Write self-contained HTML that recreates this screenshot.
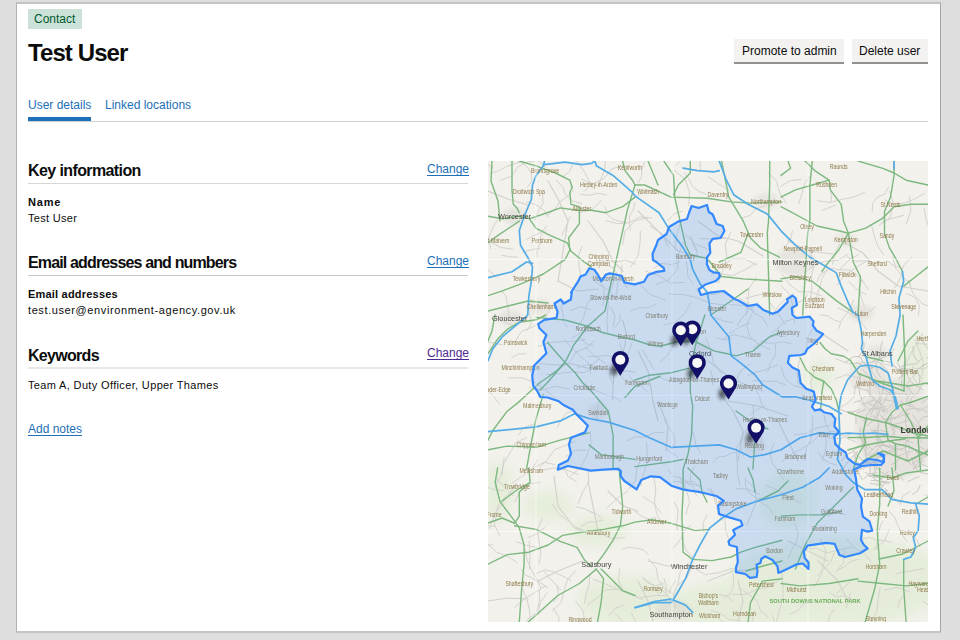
<!DOCTYPE html>
<html><head><meta charset="utf-8">
<style>
*{box-sizing:border-box;margin:0;padding:0}
html,body{width:960px;height:640px;overflow:hidden;background:#dedede;font-family:"Liberation Sans",sans-serif;color:#0b0c0c}
#panel{position:absolute;left:16px;top:2px;width:925px;height:631px;background:#fff;border-style:solid;border-width:2px 1px 2px 1px;border-color:#c4c4c4 #a6a6a6 #c4c4c4 #b0b0b0}
.abs{position:absolute;white-space:nowrap}
.tag{left:28px;top:9px;width:54px;height:20px;background:#cce2d8;color:#005a30;font-size:12px;line-height:20px;padding-left:6px}
h1{position:absolute;left:28px;top:38px;font-size:24px;font-weight:bold;line-height:30px;white-space:nowrap;letter-spacing:-0.9px}
.btn{position:absolute;top:39px;height:23px;background:#f3f2f1;box-shadow:0 2px 0 #929191;border-bottom:0;color:#0b0c0c;font-size:12px;line-height:25px;padding:0 8px;white-space:nowrap}
.tab{position:absolute;top:97px;font-size:12px;line-height:16px;color:#1d70b8;white-space:nowrap}
.tabbar{position:absolute;left:28px;top:117px;width:63px;height:4px;background:#1d70b8}
.tabline{position:absolute;left:28px;top:121px;width:900px;height:1px;background:#cdcfd0}
h2{position:absolute;left:28px;font-size:16px;font-weight:bold;line-height:20px;white-space:nowrap}
.rule{position:absolute;left:28px;width:440px;height:1px;background:#d8d8d8}
.chg{position:absolute;left:427px;font-size:12px;line-height:16px;color:#1d70b8;text-decoration:underline;text-decoration-skip-ink:none;text-underline-offset:2px;white-space:nowrap}
.lbl{position:absolute;left:28px;font-size:11px;font-weight:bold;line-height:14px;white-space:nowrap}
.val{position:absolute;left:28px;font-size:11px;line-height:14px;white-space:nowrap}
#map{position:absolute;left:488px;top:161px;width:440px;height:461px;overflow:hidden;background:#f2efe9}
.t{font-size:6.3px;fill:#8e7a4b}.c{font-size:7.3px;fill:#45453d}.c2{font-size:8px;fill:#4a4a4a}.L{font-size:8.6px;font-weight:bold;fill:#3a3a33}
</style></head>
<body>
<div id="panel"></div>
<div class="abs tag">Contact</div>
<h1>Test User</h1>
<div class="btn" style="left:734px;width:110px">Promote to admin</div>
<div class="btn" style="left:852px;width:76px;padding-left:7px">Delete user</div>
<div class="tab" style="left:28px">User details</div>
<div class="tab" style="left:105px">Linked locations</div>
<div class="tabbar"></div>
<div class="tabline"></div>

<h2 style="top:161px;letter-spacing:-0.6px">Key information</h2>
<div class="chg" style="top:161px">Change</div>
<div class="rule" style="top:183px;background:#d6d6d6"></div>
<div class="lbl" style="top:195px;letter-spacing:0.8px">Name</div>
<div class="val" style="top:211px;letter-spacing:0.3px">Test User</div>

<h2 style="top:253px;letter-spacing:-0.85px">Email addresses and numbers</h2>
<div class="chg" style="top:253px">Change</div>
<div class="rule" style="top:275px;background:#c6c6c6"></div>
<div class="lbl" style="top:287px;letter-spacing:0.2px">Email addresses</div>
<div class="val" style="top:303px;letter-spacing:0.6px">test.user@environment-agency.gov.uk</div>

<h2 style="top:346px;letter-spacing:-0.7px">Keywords</h2>
<div class="chg" style="top:345px;color:#4c2c92">Change</div>
<div class="rule" style="top:367px;height:2px;background:#e8e8e8"></div>
<div class="val" style="top:378px;letter-spacing:0.35px">Team A, Duty Officer, Upper Thames</div>
<div class="chg" style="left:28px;top:421px">Add notes</div>

<div id="map"><svg width="440" height="461" viewBox="0 0 440 461">
<defs><filter id="bl" x="-50%" y="-50%" width="200%" height="200%"><feGaussianBlur stdDeviation="2.2"/></filter><filter id="bl2" x="-50%" y="-50%" width="200%" height="200%"><feGaussianBlur stdDeviation="6"/></filter></defs>
<rect width="440" height="461" fill="#f2f1ec"/>
<g filter="url(#bl2)" fill="#e2edd6" opacity="0.8"><ellipse cx="350" cy="420" rx="110" ry="45"/><ellipse cx="250" cy="445" rx="70" ry="25"/><ellipse cx="140" cy="440" rx="50" ry="25"/><ellipse cx="430" cy="200" rx="15" ry="25"/><ellipse cx="10" cy="330" rx="15" ry="30"/><ellipse cx="110" cy="370" rx="30" ry="15"/><ellipse cx="60" cy="345" rx="25" ry="15"/><ellipse cx="330" cy="215" rx="15" ry="15"/><ellipse cx="300" cy="340" rx="30" ry="30"/></g>
<g filter="url(#bl)"><ellipse cx="408" cy="268" rx="40" ry="50" fill="#d9d6d0" opacity="0.5"/><ellipse cx="380" cy="215" rx="20" ry="15" fill="#d9d6d0" opacity="0.4"/><ellipse cx="26" cy="55" rx="12" ry="8" fill="#d9d6d0" opacity="0.5"/><ellipse cx="212" cy="190" rx="10" ry="9" fill="#d9d6d0" opacity="0.5"/><ellipse cx="110" cy="250" rx="10" ry="8" fill="#d9d6d0" opacity="0.5"/><ellipse cx="266" cy="285" rx="12" ry="8" fill="#d9d6d0" opacity="0.5"/><ellipse cx="185" cy="450" rx="18" ry="10" fill="#d9d6d0" opacity="0.5"/><ellipse cx="373" cy="152" rx="12" ry="8" fill="#d9d6d0" opacity="0.5"/><ellipse cx="307" cy="101" rx="20" ry="14" fill="#d9d6d0" opacity="0.45"/><ellipse cx="278" cy="40" rx="12" ry="8" fill="#d9d6d0" opacity="0.45"/><ellipse cx="52" cy="146" rx="12" ry="8" fill="#d9d6d0" opacity="0.45"/><ellipse cx="22" cy="157" rx="12" ry="8" fill="#d9d6d0" opacity="0.45"/><ellipse cx="389" cy="192" rx="10" ry="8" fill="#d9d6d0" opacity="0.45"/><ellipse cx="358" cy="79" rx="10" ry="7" fill="#d9d6d0" opacity="0.4"/></g>
<g fill="none" stroke-linejoin="round" stroke-linecap="round">
<g stroke="#d4d2cd" stroke-width="1"><polyline points="142.5,69.5 141.6,62.3 141.5,54.9 145.5,48.7 146.7,41.5"/><polyline points="37.8,192.8 30.2,192.9 23.7,196.9"/><polyline points="98.2,289.2 87.2,289.1 78.2,295.5"/><polyline points="377.7,133.5 368.4,128.1 360.8,120.5"/><polyline points="45.3,263.3 36.2,266.3 30.5,274"/><polyline points="90.6,313.7 79,309.1 66.8,306.9 54.6,309"/><polyline points="79.1,359.5 70.5,352.6 64.6,343.3"/><polyline points="126.7,451.9 134,459.6 135.5,470"/><polyline points="185.5,443.5 178.7,433.2 169.4,425.1"/><polyline points="305.9,274 318.4,272.3 329.7,266.7 342,264.4 350.9,255.5"/><polyline points="321.7,142.7 323.8,128.9 323.6,115 326.7,101.4 320.7,88.8"/><polyline points="203.1,77.5 208.1,86.7 209.9,97"/><polyline points="175.1,422.7 167.7,424.5 160.5,422.4 154.9,417.3"/><polyline points="380.2,128.4 372.4,116.8 360.9,108.9 347,108.7"/><polyline points="66.6,303.6 56.4,301.2 47.2,305.9"/><polyline points="184.3,170.2 186.9,179.1 183.7,187.8 178.8,195.5 171.5,201.3"/><polyline points="200.9,401.5 192.3,410.7 189.9,423.1 185.1,434.7 188,447"/><polyline points="29.6,96.2 21.9,95.7 14.2,94.4"/><polyline points="236.1,437.5 241.9,433.2 245,426.7 245.7,419.6 244.9,412.5"/><polyline points="160.2,56.6 146.7,59.9 137.1,70.1 134.4,83.8"/><polyline points="150.8,122.1 156.6,127.7 162.1,133.7 169.8,136.2 177.4,139.3"/><polyline points="11.9,243.5 3.8,233.3 -6.1,224.8 -18.8,221.6 -29.4,214"/><polyline points="234.3,359.1 229.3,348.9 228.2,337.5 222.5,327.5"/><polyline points="105.3,184.7 97.3,182.4 92.4,175.5"/><polyline points="347.7,217.7 358.8,213.6 370.2,216.7"/><polyline points="434.7,440.3 441,444.5 448,447.3 455.1,449.9"/><polyline points="433.5,281.3 431.5,271.2 424.3,263.8"/><polyline points="290.7,419.4 280.5,426.2 268.4,428.5 257.2,433.5 245,433.4"/><polyline points="427.5,182.5 439.7,183.2 448.7,191.4 460.8,192.5"/><polyline points="260,214.5 267.3,211.3 275.1,209.7 282.5,206.5 290.1,203.8"/><polyline points="57.6,6.6 49.4,-1.5 40.4,-8.8 36.2,-19.5 37.2,-31"/><polyline points="92.9,116.1 91.2,105.7 90.2,95.3 94,85.5"/><polyline points="26.8,341.1 31.6,330.5 40.7,323.2 52.2,321.4"/><polyline points="57.5,70 52.7,75.2 52.3,82.3 49,88.7 48.9,95.8"/><polyline points="208.3,334.3 205.6,327.4 202.6,320.6 202.4,313.2 206.1,306.7"/><polyline points="25,88.2 12.7,86.5 1.8,80.6"/><polyline points="401.5,204.3 388.1,201 374.3,201.9 360.5,202.7 347.7,197.7"/><polyline points="223.4,114.2 233.4,105.7 244.1,98.1 257.3,98.1 268.9,104.1"/><polyline points="60.3,56.1 55.2,48.5 47.4,43.5 38.6,40.8"/><polyline points="53.8,358.2 49.5,368.8 51,380.3 52.9,391.6 50.9,402.9"/><polyline points="41.4,408 42,394 41.2,380.1"/><polyline points="226.9,156.3 235.6,160 245,161.5"/><polyline points="201.8,324.2 195.3,317.5 186.1,315.8 180.1,308.7"/><polyline points="346.9,448 342,453.7 340,461.1"/><polyline points="332.5,377.9 337.9,389.5 336,402 332.9,414.4 326.5,425.4"/><polyline points="39.4,26.5 43.9,19.6 43.2,11.4 38.1,4.9 31.1,0.4"/><polyline points="267.6,102.5 256.3,109 244.5,114.6 231.6,112.6"/><polyline points="117.9,59.6 129.4,62.7 141.3,61.9 151.8,56 163.7,57.1"/><polyline points="276.6,244.8 268.5,248.8 261.4,254.4"/><polyline points="8,115.5 2.6,110.8 -2.8,106.1"/><polyline points="108.1,206.1 96.5,211.5 83.8,211 71.2,212.5 58.5,213.8"/><polyline points="302.6,452.9 310.3,449.5 315.3,442.7 323.4,440.7"/><polyline points="432,385.9 429.1,379 423.4,374.1"/><polyline points="37.2,387.8 39,399.4 44.1,409.9 49.8,420.1 59.6,426.6"/><polyline points="196.2,121.4 182.4,122.2 170.9,114.6 157.8,110.2"/><polyline points="156.9,0.5 153.9,7.5 153.6,15.1 150.4,21.9"/><polyline points="40,376.7 49,372.8 56.6,366.6"/><polyline points="102.4,270 103,282.9 98.6,295.1 92.5,306.6 82.7,315"/><polyline points="317.1,227.8 305.4,224.7 296.4,216.7 292.9,205.1"/><polyline points="276,338.3 268.1,337.1 261.7,332.4 257.7,325.5 257.2,317.6"/><polyline points="257,411.6 244,407.4 231,411.7 217.4,413.6 205.5,406.9"/><polyline points="165.7,208.1 160,198.2 154.1,188.5"/><polyline points="1.5,367.7 6.2,355.1 11.3,342.5 20.4,332.5 29.1,322.2"/><polyline points="356.1,390.1 355.4,402.2 347.4,411.3"/><polyline points="217.3,176.4 222.6,188.7 225.4,201.7 233.4,212.5"/><polyline points="263.9,152.9 258.7,164 261.7,175.8 271,183.8 282.3,188.4"/><polyline points="295.7,319.1 290.1,310.3 284.2,301.7 281.7,291.6 286.3,282.2"/><polyline points="241.6,143.7 255.1,144.4 267,150.9"/><polyline points="426,207.2 435.6,207.9 444.1,203.1 448.5,194.5"/><polyline points="328.9,120.7 332.3,113.6 339,109.2 346.6,106.9"/><polyline points="101.8,413.8 101.2,423.6 98.2,432.9 96.5,442.5"/><polyline points="320,191.9 318.7,182.7 320.7,173.7 326.6,166.6"/><polyline points="52.8,427.1 50,420.6 44,416.9 37.4,414.1 33.1,408.5"/><polyline points="33.6,426.6 39.1,438.4 41.8,451.1 42.1,464.1"/><polyline points="65.5,447.6 71.1,456.6 70.2,467.2 64.1,475.8"/><polyline points="357.3,290.8 349.3,283.5 344.1,274 338.3,264.8 336,254.2"/><polyline points="283.6,131.9 270.3,133.9 257.4,137.4"/><polyline points="124,117.9 120.1,131.2 120.1,145 118.9,158.8 119.8,172.6"/><polyline points="73.6,74.5 78.3,65.1 82.3,55.4"/><polyline points="146.4,350 152.9,354.7 160.2,358 168,356.7"/><polyline points="105.2,119.1 111.9,124.2 119.4,128.1 125.1,134.2 132.8,137.7"/><polyline points="118.9,346.7 125.6,340.8 132.3,334.8 139.9,330.2"/><polyline points="379.7,99.6 368.2,106.2 357.3,113.9 348.9,124.1"/><polyline points="358.3,446.3 360.4,439.4 362.3,432.4"/><polyline points="258.4,0.1 270.7,-5.4 282.8,-11.4 294.5,-18.2"/><polyline points="344.6,103.2 346.6,92.7 351.7,83.4"/><polyline points="284.8,352.6 281,346 274.4,342.3 268.2,337.9"/><polyline points="16.5,329.6 5.2,328.6 -5,323.6"/><polyline points="43.8,138.5 39.9,145.9 41.8,154 43.2,162.2 39.1,169.5"/><polyline points="122.6,145.8 127.1,155.1 125.1,165.3"/><polyline points="310,141.7 317.3,137.6 321,130.1"/><polyline points="100.2,195.6 108.8,195.5 117.4,194.4 125.9,195.6"/><polyline points="87.2,367.4 99,372.7 111.9,372.7 123.9,377.3 136.8,376.6"/><polyline points="204.7,122.2 200,116 199.3,108.2 198.5,100.5"/><polyline points="400.6,26 396.7,33.1 389.4,36.2 384.5,42.6 384.2,50.6"/><polyline points="26.5,181.3 33.7,170.3 46,165.4 56.7,157.8 63.2,146.3"/><polyline points="411.8,344 414.7,335.3 422.4,330.3"/><polyline points="194.7,50.2 186.1,52.8 180,59.4"/><polyline points="424.3,95.6 415.5,104.3 412.8,116.4 406.8,127.2"/><polyline points="86.1,249.6 78.1,252.1 73.3,258.9 69.4,266.3"/><polyline points="357.2,353.4 347.8,351.5 339,355.4"/><polyline points="85.8,29 79.2,35.6 71.6,41.1 66.2,48.8 58.8,54.5"/><polyline points="139.3,127.1 133,116.8 134,104.7"/><polyline points="28.7,380.8 38.4,384.4 48.5,386.5"/><polyline points="110.5,198.2 104.5,203.4 96.6,204.2 89.2,207.2"/><polyline points="304.5,69.8 302.3,78.8 296.8,86.2"/><polyline points="34.8,91 43.2,88.8 51.8,87.3"/><polyline points="143.3,451.9 149.9,464.2 162,471"/><polyline points="219.3,327.2 225.2,333 227.1,341 231.9,347.7"/><polyline points="237,356.8 237.4,369.2 241.8,380.9"/><polyline points="111.8,120 116.1,127.6 115.9,136.3 114.7,145"/><polyline points="143.6,182.6 140.3,192.6 135,201.7"/><polyline points="436,47.2 438.5,60.1 443.3,72.4 441.2,85.4"/><polyline points="102.5,23.2 96.5,10.8 88.4,-0.4 86.8,-14.1 84.3,-27.7"/><polyline points="114.4,358.6 108.8,353.2 101.6,350.3"/><polyline points="162.2,65.2 174.1,72.7 179.8,85.4"/><polyline points="358.5,377.5 365.8,386.7 376.2,392.2 383.5,401.3"/><polyline points="241.1,29.2 230.4,22.7 220,15.6"/><polyline points="287.3,183.4 287.9,193.2 282.6,201.5 279.6,210.9"/><polyline points="249.3,164.7 252.8,158.5 257.6,153.2 261.5,147.2"/><polyline points="178.2,434.3 164.9,434.7 151.7,436.8 139.4,432"/><polyline points="202.8,74.9 204.6,82.1 207.4,88.9"/><polyline points="252.1,427.5 260.7,433.5 269.1,439.8 272.5,449.8 280.7,456.5"/><polyline points="215.8,371 215,361.9 219.2,353.9"/><polyline points="138.4,280.1 147.2,276 156.9,276.2 165.6,271.9 175.3,271.3"/><polyline points="97.7,186.5 107,195.2 117.5,202.6"/><polyline points="227.9,176.8 235.7,178.9 243.6,177.4"/><polyline points="388.9,388.4 389,381.1 390.1,373.9 391.8,366.9 394.6,360.2"/><polyline points="134.7,193.7 129.2,200.4 123.6,207.1 121.5,215.6 125.3,223.5"/><polyline points="433.9,214.5 435.5,202.2 431.6,190.5 427.2,179"/><polyline points="47.1,59.2 50.2,50.2 55.2,42 54.4,32.5"/><polyline points="57.3,425.1 46.7,431.6 36.1,438.1 26.7,446.3"/><polyline points="418.4,62.8 422.9,49.5 421.4,35.6"/><polyline points="432,226.8 425.5,216.8 424.3,205.1"/><polyline points="268.6,116.3 261.1,127.2 259.8,140.5 258.5,153.7"/><polyline points="404.8,96 407.7,107 414.8,115.8 423,123.5"/><polyline points="280.1,128.2 281.6,141.4 289.6,152 297.2,162.9"/><polyline points="280,165.9 274.4,156.5 264.8,151.4 260.6,141.4"/><polyline points="277.1,181.8 285.9,182.2 294.7,180.8 303.3,182.8"/><polyline points="194.6,81.5 190.4,94.5 189.7,108.2 180.9,118.7 168.1,123.4"/><polyline points="408.5,412.9 415.3,411 422.2,410.2 429.1,408.7 436,407.4"/><polyline points="394,60.9 404.7,57.1 415.6,54.4"/><polyline points="133.6,241.1 126.8,236 118.5,234 110.6,230.6 102.6,227.5"/><polyline points="59.3,431.8 52.1,441.3 50.2,453.1"/><polyline points="292.8,124.4 302.4,134.3 305.4,147.7 306.6,161.4"/><polyline points="254.5,277.5 248.1,287.8 249.2,299.9 249.6,312 251.7,324"/><polyline points="104.6,26.9 100.4,21.2 93.9,18.2"/><polyline points="87.8,280.3 77.1,284.6 66.3,288.7 59.8,298.2 51.7,306.5"/><polyline points="437.4,333.9 447.8,339.9 455.6,349 463.8,357.8"/><polyline points="326.4,208.6 322.6,222.1 326.1,235.6"/><polyline points="392.2,426.5 390.1,438.3 389.1,450.2 383.4,460.8"/><polyline points="230.2,122.3 234.5,109.5 238.9,96.7 237.2,83.4 242.9,71.1"/><polyline points="370.4,93.5 360,99.9 351.4,108.7"/><polyline points="105.2,418.4 117.8,423.1 130.2,428.5 142.7,433.4 155,438.8"/><polyline points="2.8,12.2 11,9.5 18.7,5.5 26.8,2.6 35.1,0.3"/><polyline points="75.5,15.2 81.6,10.4 84.6,3.3"/><polyline points="12.6,19.2 23.5,15.4 30,5.9 40.2,0.7 51.7,-0.6"/><polyline points="87.7,440.1 95.6,450.7 96.4,463.9 89.4,475.1 89.3,488.3"/><polyline points="90.5,51.6 103.9,48.8 113.5,39.2"/><polyline points="330.6,291.5 334.9,297.8 341.5,301.9 348.8,304.3"/><polyline points="186.5,9.6 197.1,18 201.4,30.8 200.8,44.3"/><polyline points="264.9,219.5 276.2,220.3 287.5,220.1 298.1,224.2"/><polyline points="152.6,324.8 155.1,314.2 158.7,303.8 159.2,292.9 158.6,281.9"/><polyline points="230.4,132.9 223.4,133.4 216.7,131"/><polyline points="81.2,228 67.8,225.2 54.6,229 41.1,226.7"/><polyline points="412.8,106.7 405.4,104.7 399.3,99.8"/><polyline points="306.7,362.8 310.1,371.4 308.5,380.6 303.9,388.6 300.2,397.2"/><polyline points="284.2,171.5 291.4,166.3 297.6,160 306.1,157.8"/><polyline points="102.8,212.5 100.2,201.6 91.5,194.6 83.7,186.6 76.1,178.4"/><polyline points="381.9,207.6 388.7,217.7 391.2,229.6 392.4,241.8 399.5,251.7"/><polyline points="203.3,408 198.5,417.5 190.1,423.8"/><polyline points="271.6,333.5 260.7,328.4 248.6,327.6"/><polyline points="420.5,119.3 424.9,132.5 434.3,142.8 447.5,147.5 461.3,145.3"/><polyline points="132.9,137.1 125,134.5 116.6,135.3 108.5,137.4"/><polyline points="14.9,183.9 3.3,181.7 -8.5,180.1 -19.5,184.4"/><polyline points="265.6,186.6 272.6,181.3 280.1,177 288.4,174.3 296.9,175.7"/><polyline points="293.9,300.8 303.1,293.3 313.7,287.8 323.9,281.7 332.1,273.1"/><polyline points="276.4,45.1 268.2,47.9 262.2,54.3 254,57"/><polyline points="212.4,9.1 212,-1.6 217.2,-10.8 220.1,-21"/><polyline points="4.7,383.5 -2.4,385 -9.6,383.6"/><polyline points="413.9,239.4 403.9,247.6 394.1,256.1"/><polyline points="7.1,365.4 -3.5,364.7 -13.6,368.3 -24.2,369.2"/><polyline points="172.7,351.6 165.2,342.1 155,335.6"/><polyline points="168,28.4 158.3,30.5 149.3,34.7"/><polyline points="116.7,103.5 125.8,107 130.6,115.5 129.4,125.2 128.6,135"/><polyline points="72.4,428.5 63.6,419.4 55.5,409.6"/><polyline points="99.4,444.3 108.7,437.3 117,429.1 128.7,428.2"/><polyline points="334.4,299.5 337.2,290.4 338.4,281 336.4,271.8"/><polyline points="187.5,85.7 188.8,73.1 192.8,61.1"/><polyline points="140.9,223.5 133,215.3 131.1,204 134.9,193.1 131.6,182.1"/><polyline points="364.3,417.6 357.3,425.7 348.7,432.1"/><polyline points="92.3,33.2 101,34.4 109.5,32.3 118.1,33.7"/><polyline points="152.4,70.4 152,82.9 149.8,95.2 142.9,105.8"/><polyline points="294.1,412.1 294.9,424.9 295.1,437.8 291.1,450 288.1,462.5"/><polyline points="388.4,255.9 392.6,246.9 397.6,238.3 402.4,229.6"/><polyline points="398.4,322.9 390.8,315.7 380.3,315"/><polyline points="369.9,215.7 367.4,225.9 365.9,236.3 358.1,243.3 348.8,248.1"/><polyline points="79.4,166.1 75.2,160.3 75,153.1 73.2,146.2 76.1,139.6"/><polyline points="224.7,223.4 224.5,216.2 222.7,209.2"/><polyline points="379.1,168.8 371.6,158.9 361.4,151.8 349.9,147"/><polyline points="110.7,24.3 113.8,15.8 117,7.3 117.3,-1.7"/><polyline points="222.8,449.5 232.8,452.7 241.3,458.6 251.8,459.5 259.4,466.6"/><polyline points="38.5,459.4 48.1,452 51.4,440.4 51.5,428.4"/><polyline points="2.7,87.6 0.8,76.5 5.1,66.1 11.1,56.5"/><polyline points="271.3,289 273.8,277.4 268.8,266.7 265.8,255.2 264.9,243.4"/><polyline points="76.5,305.9 79.8,315.3 88.3,320.6"/><polyline points="383.6,63.9 386.1,74.6 389.7,84.9 395.8,94"/><polyline points="189.5,295.9 180.8,290 174.9,281.3"/><polyline points="185.3,320.7 195.4,320 205.5,320.6 213.4,326.9"/><polyline points="431.5,219.2 441.2,224.2 446.7,233.5 450.5,243.7"/><polyline points="187.9,4.3 193.4,-1.3 201,-3.4 206.5,-9 207.3,-16.8"/><polyline points="316.5,111.7 326,104 337.6,100.1 349.8,99.4 360.2,93"/><polyline points="334.1,135.1 322.9,131 310.9,130.8 301.5,123.5 294.7,113.6"/><polyline points="5,6.8 -4.8,0.3 -16,-3.5 -26.6,-8.8 -31.9,-19.3"/><polyline points="367.4,280.7 358.5,277.1 350.8,271.5 341.3,270.2"/><polyline points="350.8,167.5 353.2,159.7 358.3,153.3 363,146.7 365.4,138.9"/><polyline points="332.1,153.9 339.5,154.8 345.7,158.8 352.7,161.3"/><polyline points="266.6,450.6 263.6,461.4 255.5,469.1"/><polyline points="165.7,315.7 167.8,327.9 166.6,340.3 168.5,352.5 174.2,363.5"/><polyline points="69.2,424.4 70.5,433.3 65.8,441"/><polyline points="64.7,449.6 73.2,441.5 75.9,430 79.5,418.8 87.3,410"/><polyline points="88.2,345.8 97.1,347.8 105.2,352.2"/><polyline points="407.4,270.3 399,279.6 387.5,284.5"/><polyline points="339.8,107.4 334.4,116.6 331.5,126.8 328.5,137 330,147.6"/><polyline points="93.6,42.5 84.9,39.9 77.9,34.2 74.5,25.9 68.4,19.2"/><polyline points="406,227.4 399.4,234.4 394.8,242.8"/><polyline points="13.4,129.3 17.8,134.9 19,142 20.2,149 20.8,156.1"/><polyline points="115.1,359.2 107.6,360.8 99.9,361.2 93.4,365.3"/><polyline points="371.2,156.2 379.8,151.8 387.4,145.8"/><polyline points="310.5,224.4 309.1,211.5 311.5,198.6"/><polyline points="39.6,146.9 51.1,146.5 62.3,144.3"/><polyline points="197.3,73.6 207.5,83.1 220.3,88.6"/><polyline points="154.9,416.2 164.8,424.4 171.8,435.2"/><polyline points="284.5,454.3 286.6,461.7 291.5,467.7"/><polyline points="329.2,271.9 340.5,276.9 352.7,277.8 363.8,272.4"/><polyline points="211.8,77.7 224.4,77.8 237.1,77.3"/><polyline points="401.5,368.3 396,380.6 385.2,388.6"/><polyline points="391,64.4 402.1,56.4 405.8,43.2 401.4,30.2"/><polyline points="427.8,148.7 417.9,145.6 407.6,146.5"/><polyline points="25,329 16.5,339.2 9.2,350.2 6.3,363.1 11.9,375.1"/><polyline points="251.2,136.7 258.4,141.9 265.7,146.9"/><polyline points="67.5,236.7 56.9,228.7 46.1,221 33.5,216.8 20.3,217"/><polyline points="88.7,167.9 95.8,155.9 99.1,142.3 109.1,132.5"/><polyline points="25.3,334.9 19.7,329.2 14.1,323.4 8.7,317.5"/><polyline points="194.9,364 194.5,373 195.2,382 198.7,390.3 205.4,396.3"/><polyline points="371.1,240.5 380.6,247.7 392.6,248.5"/><polyline points="267.8,228.4 271.5,235.7 273.9,243.6 279.3,249.8"/><polyline points="135.5,4.6 123.8,7.8 116.2,17.3 105.3,22.6 95.9,30.3"/><polyline points="370.4,398.5 363,400.1 357.2,405.1 350.4,408.6"/><polyline points="109.3,259.6 107.8,252.5 110,245.6 110.8,238.3"/><polyline points="410.1,446.6 411.8,438.9 417.1,433.1"/><polyline points="141.2,327.9 147.8,319 148.7,308 153.1,297.9"/><polyline points="196.4,11.8 201,18.3 204.5,25.4 210.8,30.3 218.1,33.3"/><polyline points="244.4,440.4 239.1,434.8 231.5,433.7"/><polyline points="263.7,265.8 256.4,270.4 252.7,278.2 252.8,286.9 255.5,295.1"/><polyline points="204.5,270.1 206.6,277.6 208.2,285.2 212.6,291.6"/><polyline points="99.9,308.3 100.9,320.5 94.7,331 90.2,342.4"/><polyline points="185,387.1 190,381.8 193.9,375.7 196.8,369.1 202.5,364.6"/><polyline points="314.8,388.6 327.4,387.2 339.1,391.9 351.4,388.8 363.7,386"/><polyline points="421.5,430.7 409.1,426.4 396.3,429.1"/><polyline points="82.5,149.5 92.3,145.7 102.4,148.6"/><polyline points="341.7,431.9 348,435.7 355.3,434.9 362,437.7 368.2,441.7"/><polyline points="403.9,287.4 414.2,284.1 422.7,277.5 431.5,271.2 439.6,264.1"/><polyline points="418.4,132.5 426.9,136.5 431.4,144.8 430.5,154.2"/><polyline points="396.6,38.9 406.5,43.2 417.2,42 427.1,37.8 436.3,32.4"/><polyline points="126.9,112.2 124.8,124.2 119.6,135.2"/><polyline points="97.5,178.2 85.7,180.4 73.8,180.7 61.8,181.4 50.5,185.3"/><polyline points="106.6,102.1 116.8,98.5 127.3,101.3 137.8,98.9 147.7,103.3"/><polyline points="142.5,150 150.9,146.8 159.9,146.9 168,142.9"/><polyline points="29.4,401.7 19.6,395.4 8.8,391.2 0.2,383.4"/><polyline points="229.2,456.1 238.2,464.3 248.6,470.5 257.3,479.1 264.4,488.9"/><polyline points="374,378.6 381.3,376.2 388.4,379 396.1,379.5 403.5,381.3"/><polyline points="278.1,324.3 290.2,329.4 301.6,335.9 313,342.4"/><polyline points="423.6,263.7 419.1,275.8 421.6,288.5 417.8,300.9"/><polyline points="304.8,132.8 297.3,138 290.9,144.3 286.1,152"/><polyline points="346.3,391.7 342.9,400.7 336,407.5 329.8,414.9"/><polyline points="165.9,106.9 174,102.4 183.1,103.6 192,101"/><polyline points="187.6,419.8 183.6,425.7 181.4,432.5"/><polyline points="236,144 222.2,142.2 209.2,136.8 195.6,133.6 181.7,133"/><polyline points="261.7,161.9 250.9,166.5 241.1,172.9"/><polyline points="176.4,258.8 180.3,265.9 185.1,272.4 187.2,280.2 184.8,287.9"/><polyline points="258.5,318.8 267.2,328.1 268.2,340.8 263.6,352.6 258.7,364.3"/><polyline points="48.6,412.4 57.3,408.7 66.4,411.2 74.9,415.2 83.2,419.6"/><polyline points="359.1,95.8 367.9,100.3 377.8,99.5"/><polyline points="250.7,291 243.5,292.2 236.9,295.2 229.7,296.3 224.9,301.8"/><polyline points="134,388.2 140.8,386.3 147.9,387.1 154.8,388.5 160.2,393.2"/><polyline points="394,237.1 388.9,246.9 388.9,257.9"/><polyline points="334.2,49.2 341.3,46.6 348.2,43.8"/><polyline points="189.5,368.9 188.6,361.9 189.9,354.9 189.7,347.8 186.4,341.6"/><polyline points="117.3,45.8 118.7,53.2 124.4,58 131.5,60.3 138.8,61.5"/><polyline points="336.2,20.2 343,29.3 343.4,40.7"/><polyline points="376.1,145.1 373.5,136.4 370.9,127.6 373.9,119"/><polyline points="106.9,179.7 98.3,186.7 88.1,191 82.6,200.6 73.1,206.4"/><polyline points="38.5,78.3 45.9,74.5 53.6,71.4 58.5,64.7"/><polyline points="234.9,177.8 245.7,173.7 257,176.3 268,179.7"/><polyline points="170.4,215.3 178.2,219.1 186.7,221 195.1,218.8"/><polyline points="310.6,42.7 313.9,32.4 316.7,22 323.5,13.5"/><polyline points="105.7,169.6 93.7,171.2 83.4,177.4"/><polyline points="418.4,232.7 420.3,219.9 430.1,211.2"/><polyline points="262.2,203 253.3,209 248.5,218.6 240.8,226"/><polyline points="298.3,42.2 291.7,31.9 288.5,20.2 280.2,11.4"/><polyline points="6.6,327.6 9.7,320 14.4,313.2 14.9,305 16.1,296.9"/><polyline points="159.1,230.7 153.2,224.7 145.9,220.7 141,214"/><polyline points="175.5,164.1 187.6,161.2 196.7,152.7 202.8,141.9"/><polyline points="13,313.3 16,301.9 22.1,291.7 27.7,281.3 38.6,276.8"/><polyline points="176.2,417.7 178.4,425.7 178,433.9"/><polyline points="313.5,18.6 302.3,19.5 292.8,25.5"/><polyline points="324.9,254.6 324.5,266.1 323,277.5 318.2,287.9 317.1,299.3"/><polyline points="191.4,315.5 197.9,327.4 201.6,340.4 197.9,353.4"/><polyline points="385,269.7 389.1,275.9 390.3,283.1 394.3,289.2 394.3,296.6"/><polyline points="329.8,39.7 341.9,41.5 353.7,38.5 365.7,36 376.8,31.1"/><polyline points="417.8,204 422.3,193.1 428.7,183.1 434.4,172.7"/><polyline points="23.9,321.9 33.7,315.5 43.4,309 49.5,298.9"/><polyline points="419,380.4 413.9,373.2 410.2,365.2 407,357 401.2,350.4"/><polyline points="26.1,165 18.9,162.4 12.7,158 6.3,153.7"/><polyline points="212.4,325.3 202.2,322.5 191.6,321.9"/><polyline points="131.7,407.8 130.4,418.9 134.8,429.1"/><polyline points="186.8,433.9 177,427.7 170.1,418.3 168.1,406.8 160.5,397.9"/><polyline points="127.3,166.2 131.7,160.3 132.3,153"/><polyline points="135.9,443.9 127.3,447.4 121.3,454.4"/></g>
<g stroke="#c9c7c2" stroke-width="1"><polyline points="370.7,196.5 373.1,191.7 375.9,187.1 376,181.8"/><polyline points="404.1,253.6 402.1,261.5 404.6,269.2"/><polyline points="387.9,277.8 393,283.5 400.5,284.8 408.1,285"/><polyline points="376.6,244.7 374.2,239.8 372.6,234.7"/><polyline points="395.4,282.4 390.8,286.7 387.1,291.8 381.5,294.6"/><polyline points="384.2,200.6 392.2,197.6 400.3,194.5 406.1,188.1"/><polyline points="389,273.5 392.3,277.9 394.8,282.9"/><polyline points="397.1,327.2 399.7,333.6 405.6,337.1 410.9,341.6"/><polyline points="431.7,264 428.5,258.8 424.8,253.9"/><polyline points="392.1,254.2 398.4,260.1 405.2,265.4"/><polyline points="410.1,242 403.5,240 396.7,238.7"/><polyline points="407.8,279.5 416.6,278.8 425,281.9"/><polyline points="369.8,286.3 364.2,290.9 357.7,294.1 353.6,300.1"/><polyline points="434.2,266.6 432.9,274.9 429.4,282.5"/><polyline points="376.8,273.2 377.7,279.5 380.6,285.3 385.5,289.5"/><polyline points="442.5,222.4 446.5,218.1 448.4,212.5"/><polyline points="418.6,290.7 419,297.9 423,303.9"/><polyline points="406.1,274.4 405.8,266 401.5,258.8"/><polyline points="405.3,263.5 412.6,261.8 419.8,259.6"/><polyline points="419.9,268.5 417.4,261.7 417.6,254.4"/><polyline points="369.6,227 371.3,222.1 372.7,217.1 371.4,212.1"/><polyline points="375.8,317.7 381.5,312.7 388.9,311.7"/><polyline points="434.7,217.7 428.9,211.8 421.5,208.2 413.4,207.5"/><polyline points="406.1,265.8 413.3,269 421.1,267.9 428.9,267.3"/><polyline points="429.2,210.3 431.8,215.7 431.5,221.7"/><polyline points="411.5,210.3 418.4,211.2 424.9,208.7"/><polyline points="439.5,313 431.3,311.3 426.1,304.7 423.6,296.8"/><polyline points="386.5,255 390.2,260.1 390.8,266.5"/><polyline points="429,199.8 425.3,193.3 425,185.8"/><polyline points="442.4,288.5 447.7,284.6 449.8,278.4 450.4,271.8"/><polyline points="382.3,315.7 386.3,311.4 389.2,306.3"/><polyline points="402.5,321.6 397.6,320.2 393,322.2 388.5,324.5"/><polyline points="443.9,201.1 449.7,206.5 457.6,207.5"/><polyline points="444.3,243.2 452.9,245.8 459.9,251.4"/><polyline points="434.8,299.5 431.1,304.8 425.2,307.6"/><polyline points="440.1,287 436.8,295.2 430,300.9 425.6,308.5"/><polyline points="434.8,291.6 433.3,296.6 428.9,299.5 424.6,302.6"/><polyline points="394.4,227.9 402.1,232.4 406.4,240.4"/><polyline points="418.7,249.7 419.7,256.9 424.6,262.2 430.8,266"/><polyline points="389.7,293.1 388.5,298.3 386.8,303.3 386.4,308.5"/><polyline points="393.3,258.2 401.2,258 408.8,255.9 414.6,250.6"/><polyline points="436.8,268.8 442,274.2 449.3,275.6"/><polyline points="400.8,315.5 393.4,311.5 387.7,305.2 387,296.8"/><polyline points="413.1,205.7 420.6,203.5 428.5,202.8 434.1,197.3"/><polyline points="390.8,198.7 392.1,192.5 392.5,186.3 394.5,180.3"/><polyline points="392,202.8 398.3,208.1 402,215.3 400.4,223.3"/><polyline points="397,321.9 393.9,326 392.1,330.8"/><polyline points="398.2,290.9 403.6,289.3 409.1,287.9 414.5,289.2"/><polyline points="393.6,243.8 387.9,239.6 383.1,234.2 379.2,228.2"/><polyline points="391.5,295 385.7,301 378.9,305.6 371.2,308.6"/><polyline points="409,290.4 402.6,291.2 396.8,294.2 390.9,296.7"/><polyline points="373,304.2 368.6,300.8 367.3,295.3 369.4,290.1"/><polyline points="415,211.5 413.6,218.6 413.6,225.8"/><polyline points="376.9,219 371.3,223.2 365.9,228"/><polyline points="433.8,223.8 429.9,231.4 423.3,237 421.5,245.4"/><polyline points="417.8,197.1 415.9,204.5 415.3,212.2 410.7,218.4"/><polyline points="395,283.7 399.7,285.8 404.8,286.1"/><polyline points="393.3,239 387,243.1 382.7,249.4 377.9,255.2"/><polyline points="377.5,311.5 384.9,316.3 393.7,316.3 400.5,310.7"/><polyline points="434.8,228.7 428.2,224.7 422,220 419.2,212.8"/><polyline points="381.8,314.3 382.1,309.1 382,303.9 379.3,299.5"/><polyline points="439.9,287.5 442.6,282.6 443.9,277.1"/><polyline points="405.2,242.5 400.3,247.2 394.5,250.9"/><polyline points="418.2,248.6 427,247.1 435.7,249.2 443.5,253.6"/><polyline points="368,263.1 368,255.8 363.6,250"/><polyline points="436.5,203.7 432,206.8 427.7,210.3"/><polyline points="379.3,287.5 375.1,281.3 371.1,274.9"/><polyline points="432.2,324.2 429.5,330 424.2,333.6"/><polyline points="423.5,231.9 420,235.5 418.3,240.2"/><polyline points="368.8,301.6 369.8,307.6 371.2,313.5 374.3,318.7"/><polyline points="391.5,250.4 389.4,256.7 384,260.4 379.1,264.9"/><polyline points="395.8,250.3 388.2,246.4 380.6,242.4"/><polyline points="444.1,288.6 449.9,281.8 451,272.9 453.5,264.3"/><polyline points="367.7,291.7 362.9,297.8 357.6,303.6 354,310.4"/><polyline points="442.7,195.1 440.6,188.4 436.3,182.9 432.9,176.7"/><polyline points="424.5,246.1 418.2,244.1 412.7,240.5"/><polyline points="390.8,279.9 388.7,271.5 390.8,263"/><polyline points="433.6,241.9 439.6,237.7 446.6,235.9 453.2,232.8"/><polyline points="381.4,217.8 381.6,223.8 382.2,229.7 381.6,235.6"/><polyline points="431.2,315.7 425.3,317.9 419.7,320.7"/><polyline points="397.8,289.9 393,292.3 388.1,294.7 383.4,297.3"/><polyline points="372,248.4 364.7,251.1 357,250.5 349.9,247.3"/><polyline points="377,286.8 374.3,280.4 371.9,273.9 372.3,267"/><polyline points="385.2,270.1 392.5,269.4 399.6,271"/><polyline points="387,238.7 381.3,240.9 375.6,243"/><polyline points="372.1,212.3 371.2,219.7 370.9,227.2 371.9,234.6"/><polyline points="422,234.9 415.6,232.7 408.9,232.9 402.9,229.9"/><polyline points="375.4,278.5 374.3,283.6 376.2,288.5 378.5,293.2"/><polyline points="396.5,251 393.6,246.4 392,241.2"/><polyline points="399.9,329.3 392,332.6 384,335.7"/><polyline points="431,285.5 436.8,288.7 442.3,292.3"/><polyline points="426.5,298.9 430,294.9 430.2,289.5"/><polyline points="404.8,309.5 410.8,313.6 415.3,319.3"/><polyline points="403.6,202.4 409.7,208.1 418.1,209.1 426.1,211.6"/><polyline points="390.6,220.7 385.1,219.1 379.6,220.9"/><polyline points="395.7,284.6 388.5,285 382.8,289.5 378.6,295.3"/><polyline points="434.3,303.3 440,305.8 445,309.5 447.1,315.3"/><polyline points="417.5,290.8 416.9,284.4 419.9,278.7"/><polyline points="409.5,201.9 412,206.3 412.3,211.3 415.6,215.1"/><polyline points="382.6,254.3 386,247.2 389,240"/><polyline points="439.8,255.1 434.7,256.2 431.3,260.2"/><polyline points="434,204.7 439.3,202.5 445,202.5 450.7,202.6"/><polyline points="418.9,286.1 411,288.3 402.8,287.2 395.4,283.8"/><polyline points="406.3,257.9 413.7,254.5 421.7,252.8"/><polyline points="385.6,317.3 390.1,320.6 395.8,320.5 400.8,323"/><polyline points="388.5,226.4 385,219.4 379.4,213.9 374.2,208.1"/><polyline points="382.2,322.7 388.7,322.9 395.1,324.4"/><polyline points="382.9,268.7 388,271.4 393.6,272.9"/><polyline points="397.1,200.2 402.5,201.4 406.2,205.4 409.8,209.6"/><polyline points="388.3,242 393.1,234.9 395.6,226.7 395.7,218.2"/><polyline points="411.7,297.1 408.2,301.4 403.1,303.6"/><polyline points="383.2,319.8 390.5,319.3 396.9,315.9"/><polyline points="377.2,235.5 372.2,239.4 366.2,241.5"/><polyline points="379.3,301.3 377.4,293.3 378.4,285.1 375,277.6"/><polyline points="377.9,248.1 373.4,250.5 368.4,251.9"/><polyline points="375.6,273 376.5,267.8 376.5,262.5 377.6,257.3"/><polyline points="372.2,195.7 375.1,201.2 379.7,205.3 385.8,206.8"/><polyline points="386.6,268 389.9,274.1 393.1,280.2 397.3,285.6"/><polyline points="380.8,249.5 389.5,247.2 398.2,245.3"/><polyline points="384.2,207.8 375.9,205 367.9,201.3"/><polyline points="420.1,226 423.1,230.7 426.8,234.9"/><polyline points="406.4,234.4 401.1,233.8 396,232.4"/><polyline points="427.7,291 435.8,292.9 443.6,290.2"/><polyline points="382.2,299.3 375.2,303.7 368.4,308.5"/><polyline points="438.7,196.5 445.4,201.1 453.5,202 461.5,203.1"/><polyline points="378.4,302.7 384.1,301.4 389.9,301.9"/><polyline points="370.4,195.4 365.2,195.8 361.2,199 356.8,201.7"/><polyline points="370,312 367.2,304.1 366.9,295.7"/><polyline points="392.9,216.9 389,210.3 388.3,202.6 392.2,196"/><polyline points="437.4,295.6 442.5,291.2 449.2,290"/></g>
<g stroke="#d3d1cc" stroke-width="1.2"><polyline points="0,30 20,38 40,44"/><polyline points="60,20 70,38 80,60 75,90 70,120"/><polyline points="100,60 115,80 125,100 135,110"/><polyline points="150,50 170,70 190,90 210,95"/><polyline points="210,60 230,75 250,80 275,95"/><polyline points="300,80 320,90 345,93"/><polyline points="350,78 375,92 390,110 410,125 440,130"/><polyline points="70,120 90,130 110,128"/><polyline points="52,202.75 70.75,204 83.25,202.75 99.5,207.1 122,208.4 147,211"/><polyline points="134.5,159 138.25,171.5 137,184 133.25,196.5 125.75,214 124.5,239"/><polyline points="150,190 160,210 165,240 170,260"/><polyline points="220,200 240,215 260,225 275,230"/><polyline points="230,230 245,250 255,270 250,300"/><polyline points="240,240 270,245 300,255"/><polyline points="170,240 180,265 178,290"/><polyline points="66,315 70,345 85,365 96,370"/><polyline points="100,320 105,345 110,370"/><polyline points="50,420 70,410 95,400"/><polyline points="120,330 135,345 150,350"/><polyline points="0,440 20,437 40,438"/><polyline points="160,400 180,405 204,405"/><polyline points="220,420 245,410 270,408"/><polyline points="300,380 320,390 340,400"/><polyline points="330,400 350,420 360,440"/><polyline points="330,170 345,180 360,190"/><polyline points="365,225 380,230 390,245 400,250"/><polyline points="375,260 385,255 395,262 405,258"/><polyline points="420,240 430,250 440,245"/><polyline points="365,290 375,300 385,305"/><polyline points="400,280 410,295 425,290"/><polyline points="290,260 300,280 310,300"/><polyline points="250,420 255,440 250,460"/><polyline points="150,420 160,440 165,460"/></g>
<g stroke="#7db87f" stroke-width="1.4"><polyline points="24,0 24,29 25.3,43.3 28.9,46.9 31.3,51.7"/><polyline points="0,55.3 14.4,57.7 31.3,55.3 42.1,57.7 62.6,50.5 72.2,46.9 89,49.3 103.5,49.3 117.9,51.7 134.7,45.7 147,36.1"/><polyline points="42.1,58.9 48.1,67.4 62.6,74.6 79.4,81.8 83,90.2 96.2,101 103.5,105.9"/><polyline points="84.2,26.5 81.8,31.3 83,43.3 91.4,45.7 91.4,62.6 80.6,77 81.8,89 77,98.7 55.3,113 33.7,122.7 14.4,129.9 0,134.7"/><polyline points="147,24 139.6,48.1 134.7,69.8 129.9,91.4 125.1,113.1 120.3,134.7 117,150 110,156 107,159"/><polyline points="0,81.8 9.6,74.6 24,65 31.3,60.2"/><polyline points="31.3,0 48.1,4.8 67.4,12 81.8,19.2 84.2,26.5"/><polyline points="134.7,0 137,9.6 144.4,19.2 147,24"/><polyline points="4,0 3,20 10,40 12,60"/><polyline points="0,150 20,145 40,140 60,142"/><polyline points="175.9,0 185.5,14.4 186.7,36.1 197.5,84.2 202.3,93.8"/><polyline points="147,24 156.6,24 183.1,36.1 219.2,37.3 243.2,40.9 262.5,42.1 294,40.9"/><polyline points="202.3,0 202.3,12 190.3,24 185.5,33.7"/><polyline points="202.3,93.8 219.2,97.5 233.6,115.5 255.3,117.9 294,120.3"/><polyline points="233.6,0 240.8,36.1 255.3,60.2 262.5,77 272.1,86.6 291.4,96.2"/><polyline points="281.7,0 281.7,24 280.5,60.2 279.3,72.2 281.7,154"/><polyline points="260.1,72.2 252.9,91.4 231.2,101"/><polyline points="222.8,154 240,142 260,128"/><polyline points="160,0 165,12 170,24"/><polyline points="406.1,0 406.1,14.4 402.5,36.1 396.5,50.5 396.5,72.2 401.3,86.6 408.5,98.7 414.5,110.7"/><polyline points="317.1,0 326.7,9.6 341.1,19.2 342.3,28.9 353.2,43.3 355.6,60.2 360.4,72.2 365.2,101 372.4,115.5 370,154"/><polyline points="293,45.7 329.1,65 350.7,69.8 360.4,72.2 377.2,67.4 394.1,57.7 406.1,45.7 422.9,43.3 440,43.3"/><polyline points="324.3,0 321.9,24 321.9,57.7 319.5,74.6 317.1,115.5 314.7,154"/><polyline points="370,0 394.1,7.2 406.1,12 418.1,19.2 440,24"/><polyline points="293,36.1 307.4,28.9 324.3,24 341.1,19.2"/><polyline points="360.4,72.2 350.7,89 338.7,103.5 333.9,110.7"/><polyline points="440,105.9 427.8,115.5 415.7,125.1"/><polyline points="293,117.9 307.4,115.5 324.3,120.3 348.3,139.6 365.2,151.6"/><polyline points="293,14.4 302.6,7.2 300,0"/><polyline points="0,192.5 9.6,178.1 19.2,168.4 31.3,161.2 48.1,158.8 57.7,154"/><polyline points="48.1,156.4 77,159 99.5,165.25 114.5,171.5 129.5,175.25 147,179 162,184 172,185.25 190.3,180.5 207.2,180.5 226.4,190.1 238.4,192.5 248.1,194.9 264.9,190.1 281.7,175.7 294,170.8"/><polyline points="107,159 99.5,165.25 93.25,174 85.75,184 79.5,196.5 77,201.5 69.5,209 59.5,216.5 52,221.5 31.3,240.6 19.2,250.2 4.8,269.5 0,279.1"/><polyline points="59.5,181.5 77,201.5 87,211.5 94.5,221.5 104.5,231.5 110.75,239 120.3,250.2 125.1,274.3 125.1,308"/><polyline points="77,201.5 67,212.75 59.5,221.5 52,229"/><polyline points="172,215.25 147,225.25 137,236.5"/><polyline points="55.3,233.4 48.1,257.5 43.3,281.5 38.5,308"/><polyline points="0,288.7 19.2,285.1 48.1,286.3 72.2,279.1 101,271.9"/><polyline points="101,283.9 113.1,293.6 147,298.4"/><polyline points="7,154 4,170 0,180"/><polyline points="216.8,154 207.2,185.3 202.3,214.2 202.3,231 204.7,245.4 203.5,274.3 199.9,293.6 195.1,308 195.1,331.1 193.9,355.1 195.1,391.2 204.7,398.4"/><polyline points="147,219 161.4,214.2 183.1,211.7 202.3,206.9"/><polyline points="267.3,274.3 264.9,308"/><polyline points="147,305.6 183.1,300.8 195.1,298.4"/><polyline points="248,250 265,262 280,268"/><polyline points="360,251.5 378.75,257.75 397.5,261.5 412.5,266.5 425,272 440,275"/><polyline points="397.5,261.5 398.75,270.25 400,279 407.5,282.75 420,285.25 427.5,289 440,294"/><polyline points="360,276.5 378.75,276.5 397.5,275.25 412.5,276.5 440,277"/><polyline points="360,289 372.5,285.25 391.25,281.5 407.5,279 417.5,277.75"/><polyline points="378.75,256.5 375,271.5 377.5,281.5 370,294 365,309"/><polyline points="412.5,244 422.5,260.25 430,276.5 432.5,309"/><polyline points="440,235.25 422.5,241.5 412.5,244 403.75,251.5 397.5,261.5"/><polyline points="407.5,282.75 407.5,309"/><polyline points="430,276.5 440,265"/><polyline points="332,181.5 337,187.75 343.25,192.75 355.75,195.25 362,199 367,206.5 370.75,212.75 380.75,216.5 392,221.5 405,226 416,230"/><polyline points="312,196.5 318.25,209 327,216.5 335.75,220.25 343.25,227.75 348.25,239 350.75,249"/><polyline points="335.75,220.25 333.9,231.5 332.6,249"/><polyline points="378,196 388,198 395,200"/><polyline points="416,230 417,200 415,154"/><polyline points="390,220 420,225 440,222"/><polyline points="430,170 420,180 410,200"/><polyline points="375,300 395,290 420,300 440,290"/><polyline points="9.6,307 7.2,321.4 12,340.7 26.5,359.9 31.3,367.2 36.1,384 36.1,403.2 33.7,427.3 31.3,461"/><polyline points="40.9,307 42.1,321.4 31.3,331.1 31.3,355.1 26.5,362.3"/><polyline points="14,340 29,329 41,322"/><polyline points="26.5,364.8 48.1,368.4 72.2,380.4 89,386.4 96.2,398.4 103.5,405.7"/><polyline points="0,403.2 19.2,393.6 40.9,391.2 60.2,384 74.6,374.4 96.2,370.8 115.5,368.4 134.7,364.8 147,361.1 163.8,358.7 183.1,362.3 207.2,369.6 221.6,368.4"/><polyline points="131.1,307 132.3,321.4 134.7,345.5 132.3,364.8 125.1,379.2 115.5,393.6 108.3,403.2"/><polyline points="108.3,408.1 115.5,417.7 113.1,441.7 109.5,461"/><polyline points="108.3,408.1 91.4,422.5 69.8,434.5 45.7,456.2 40,461"/><polyline points="113.1,408.1 125.1,420.1 134.7,429.7 147,434.5"/><polyline points="0,362 14,357 26,362"/><polyline points="204.7,398.4 224,399.6 243.2,396 252.9,391.2 267.3,386.4 294,379.2"/><polyline points="294,417.7 274.5,420.1 262.5,441.7 260.1,461"/><polyline points="200,307 212,319 214,331 219,341"/><polyline points="260,307 265,319 267,331"/><polyline points="270,340 290,330 300,320"/><polyline points="365.2,326.2 353.2,338.3 341.1,350.3 329.1,362.3 317.1,384 307.4,408.1"/><polyline points="293,355.1 312.2,353.9 333.9,353.9 353.2,350.3"/><polyline points="391.7,307 391.7,343.1 389.2,369.6 391.7,403.2 386.8,427.3 377.2,461"/><polyline points="370,420.1 394.1,422.5 418.1,424.9 440,422.5"/><polyline points="293,422.5 312.2,424.9 341.1,422.5 370,417.7"/><polyline points="415.7,398.4 415.7,427.3 418.1,461"/><polyline points="391,398 415,393 440,380"/><polyline points="404,307 406,330 400,345"/><polyline points="385,314 404,317 418,312 440,309"/><polyline points="428,343 440,336"/><polyline points="258,410 275,405 294,400"/></g>
<g stroke="#55ade6" stroke-width="1.7"><polyline points="56.5,0 55.3,4.8 48.1,14.4 44.5,24 43.3,38.5 36.1,55.3 31.3,69.8 32.5,84.2 39.7,96.2 44.5,105.9 43.3,120.3 40.9,134.7 39.7,154 36.1,157.6 14.4,175.7 4.8,187.7 0,199.7"/><polyline points="56.5,3.6 77,1.2 93.8,3.6 103.5,2.4 107,0"/><polyline points="107,0 108.3,4.8 125,14.4 144.4,31.3 147,34.9 171,51.7 180.7,67.4 195.1,86.6 202.3,98.7 204.7,108.3 212,122.7 219.2,131.1 221.6,144.4 222.8,154 228.8,161.2 240.8,175.7 243.2,194.9 252.9,202.1 267.3,214.2 274.5,223.8 294,235.8 307.4,235.8 321.9,239.4 341.1,245.4 353.2,252.7"/><polyline points="0,116.7 24,110.7 38.5,101 44.5,102.3"/><polyline points="195.1,7.2 209.6,9.6 226.4,10.8 231.2,9.6"/><polyline points="231.2,0 238.4,19.2 245.7,33.7 260.1,43.3 279.3,52.9 293,69.8 307.4,84.2 321.9,96.2 338.7,105.9 348.3,111.9 353.2,125.1 360.4,142 365.2,151.6 370,154 373.25,169 374.5,181.5 373.25,187.75 378.25,196.5 380.75,206.5 384.5,219 392,225.25 402.5,229 407.5,236.5 410,247.75"/><polyline points="406.1,0 406,8"/><polyline points="414.5,110.7 415.7,120.3 410.9,137.2 412.1,154 408,175 402,190 404,205"/><polyline points="0,270.7 24,268.3 48.1,265.9 72.2,259.9 86.6,252.7 101,257.5 120.3,261.1 147,269.5 161.4,276.7 183.1,286.3 207.2,285.1 231.2,283.9 248.1,288.7 262.5,296 276.9,293.6 293,288.7 312.2,276.7 331.5,271.9 348.3,273.1 360,272.1 372.5,272.75 385,272.1 400,273.4"/><polyline points="349.5,298.4 352,279.1 350.75,249 353.25,234 359.5,219 368.25,209 372,205.25 379.5,204 387,205.25 392,206.5 400,212 404,225 408.5,247.8"/><polyline points="349.5,298.4 358,314.2 365.2,321.4 377.2,328.7 394.1,328.7 403.7,338.3 422.9,341.9 440,343.1"/><polyline points="427.7,343.1 431.3,355.1 430.1,369.6 425.3,376.8 427.7,386.4 422.9,396 415.7,398.4"/><polyline points="341.1,307 331.5,316.6 314.7,326.2 294,333.5 267.3,340.7 248.1,347.9 233.6,357.5 221.6,367.2 212,384 204.7,398.4 197.5,417.7 187.9,434.5 183.1,441.7 166.2,441.7 147,446.6"/><polyline points="147,446.6 166.2,440.5 183.1,438.1 197.5,444.1 204.7,451.4"/></g>
</g>
<g text-anchor="middle" font-family="Liberation Sans, sans-serif"><text x="57" y="12.4" class="t" transform="matrix(0.83 0 0 1 9.69 0)">Bromsgrove</text><text x="110.7" y="25.6" class="t" transform="matrix(0.83 0 0 1 18.82 0)">Henley-in-Arden</text><text x="40.9" y="33.1" class="t" transform="matrix(0.83 0 0 1 6.95 0)">Droitwich Spa</text><text x="26.5" y="57.5" class="c">Worcester</text><text x="93.8" y="50.4" class="t" transform="matrix(0.83 0 0 1 15.95 0)">Alcester</text><text x="5" y="82.4" class="t" transform="matrix(0.83 0 0 1 0.85 0)">Great Malvern</text><text x="54.1" y="82.4" class="t" transform="matrix(0.83 0 0 1 9.20 0)">Pershore</text><text x="110.7" y="98.5" class="t" transform="matrix(0.83 0 0 1 18.82 0)">Chipping</text><text x="110.7" y="105.3" class="t" transform="matrix(0.83 0 0 1 18.82 0)">Campden</text><text x="38.5" y="119.7" class="t" transform="matrix(0.83 0 0 1 6.55 0)">Tewkesbury</text><text x="125" y="120.2" class="t" transform="matrix(0.83 0 0 1 21.25 0)">Moreton-in-Marsh</text><text x="122.7" y="139.5" class="t" transform="matrix(0.83 0 0 1 20.86 0)">Stow-on-the-Wold</text><text x="52.9" y="148.3" class="t" transform="matrix(0.83 0 0 1 8.99 0)">Cheltenham</text><text x="142" y="9.5" class="t" transform="matrix(0.83 0 0 1 24.14 0)">Kenilworth</text><text x="230" y="36" class="t" transform="matrix(0.83 0 0 1 39.10 0)">Daventry</text><text x="278.1" y="42.7" class="t" transform="matrix(0.83 0 0 1 47.28 0)">Northampton</text><text x="160.2" y="33.1" class="t" transform="matrix(0.83 0 0 1 27.23 0)">Whitnash</text><text x="263.7" y="75.7" class="t" transform="matrix(0.83 0 0 1 44.83 0)">Towcester</text><text x="197.5" y="98.5" class="t" transform="matrix(0.83 0 0 1 33.58 0)">Banbury</text><text x="233.6" y="107.4" class="t" transform="matrix(0.83 0 0 1 39.71 0)">Brackley</text><text x="284.2" y="135.8" class="t" transform="matrix(0.83 0 0 1 48.31 0)">Winslow</text><text x="228.8" y="149.6" class="t" transform="matrix(0.83 0 0 1 38.90 0)">Bicester</text><text x="350.7" y="8.3" class="t" transform="matrix(0.83 0 0 1 59.62 0)">Raunds</text><text x="338.7" y="25.9" class="t" transform="matrix(0.83 0 0 1 57.58 0)">Rushden</text><text x="402.5" y="45.6" class="t" transform="matrix(0.83 0 0 1 68.43 0)">St Neots</text><text x="319" y="67.7" class="t" transform="matrix(0.83 0 0 1 54.23 0)">Olney</text><text x="358" y="81.2" class="t" transform="matrix(0.83 0 0 1 60.86 0)">Kempston</text><text x="398.9" y="76.9" class="t" transform="matrix(0.83 0 0 1 67.81 0)">Sandy</text><text x="314.7" y="90.1" class="t" transform="matrix(0.83 0 0 1 53.50 0)">Newport Pagnell</text><text x="307.4" y="104.1" class="c">Milton Keynes</text><text x="312.2" y="119.5" class="t" transform="matrix(0.83 0 0 1 53.07 0)">Bletchley</text><text x="359.2" y="115.9" class="t" transform="matrix(0.83 0 0 1 61.06 0)">Flitwick</text><text x="389.2" y="105.3" class="t" transform="matrix(0.83 0 0 1 66.16 0)">Shefford</text><text x="400.1" y="133" class="t" transform="matrix(0.83 0 0 1 68.02 0)">Hitchin</text><text x="326.7" y="140.7" class="t" transform="matrix(0.83 0 0 1 55.54 0)">Leighton</text><text x="326.7" y="146.7" class="t" transform="matrix(0.83 0 0 1 55.54 0)">Buzzard</text><text x="415.7" y="147.9" class="t" transform="matrix(0.83 0 0 1 70.67 0)">Stevenage</text><text x="373.6" y="155.1" class="t" transform="matrix(0.83 0 0 1 63.51 0)">Luton</text><text x="21.7" y="160.2" class="c">Gloucester</text><text x="100.1" y="170.3" class="t" transform="matrix(0.83 0 0 1 17.02 0)">Northleach</text><text x="138.25" y="177.55" class="t" transform="matrix(0.83 0 0 1 23.50 0)">Burford</text><text x="27.7" y="184.5" class="t" transform="matrix(0.83 0 0 1 4.71 0)">Painswick</text><text x="32.5" y="209.2" class="t" transform="matrix(0.83 0 0 1 5.53 0)">Minchinhampton</text><text x="110.75" y="208.8" class="t" transform="matrix(0.83 0 0 1 18.83 0)">Fairford</text><text x="96.4" y="229.4" class="t" transform="matrix(0.83 0 0 1 16.39 0)">Cricklade</text><text x="0" y="230.9" class="t" transform="matrix(0.83 0 0 1 0.00 0)">Wotton-under-Edge</text><text x="49.3" y="247" class="t" transform="matrix(0.83 0 0 1 8.38 0)">Malmesbury</text><text x="110.2" y="254.5" class="t" transform="matrix(0.83 0 0 1 18.73 0)">Swindon</text><text x="43.3" y="286.2" class="t" transform="matrix(0.83 0 0 1 7.36 0)">Chippenham</text><text x="121.5" y="297.8" class="t" transform="matrix(0.83 0 0 1 20.66 0)">Marlborough</text><text x="168.7" y="157.5" class="t" transform="matrix(0.83 0 0 1 28.68 0)">Charlbury</text><text x="167.5" y="184.7" class="t" transform="matrix(0.83 0 0 1 28.48 0)">Witney</text><text x="212" y="194.6" class="c">Oxford</text><text x="206.6" y="173.3" class="t" transform="matrix(0.83 0 0 1 35.12 0)">Kidlington</text><text x="264.9" y="196" class="t" transform="matrix(0.83 0 0 1 45.03 0)">Thame</text><text x="206" y="220.8" class="t" transform="matrix(0.83 0 0 1 35.02 0)">Abingdon-on-Thames</text><text x="148.9" y="224.05" class="t" transform="matrix(0.83 0 0 1 25.31 0)">Faringdon</text><text x="261.3" y="228" class="t" transform="matrix(0.83 0 0 1 44.42 0)">Wallingford</text><text x="214.4" y="239.8" class="t" transform="matrix(0.83 0 0 1 36.45 0)">Didcot</text><text x="179.5" y="245.8" class="t" transform="matrix(0.83 0 0 1 30.52 0)">Wantage</text><text x="276.9" y="261.4" class="t" transform="matrix(0.83 0 0 1 47.07 0)">Henley-on-Thames</text><text x="266.1" y="287.4" class="t" transform="matrix(0.83 0 0 1 45.24 0)">Reading</text><text x="161.4" y="299.9" class="t" transform="matrix(0.83 0 0 1 27.44 0)">Hungerford</text><text x="208.4" y="302.6" class="t" transform="matrix(0.83 0 0 1 35.43 0)">Thatcham</text><text x="300.2" y="174.3" class="t" transform="matrix(0.83 0 0 1 51.03 0)">Aylesbury</text><text x="324.3" y="181.6" class="t" transform="matrix(0.83 0 0 1 55.13 0)">Tring</text><text x="385.6" y="175.1" class="t" transform="matrix(0.83 0 0 1 65.55 0)">Harpenden</text><text x="389.2" y="195.1" class="c">St Albans</text><text x="438" y="180.3" class="t" transform="matrix(0.83 0 0 1 74.46 0)">Hertford</text><text x="335.1" y="209.7" class="t" transform="matrix(0.83 0 0 1 56.97 0)">Chesham</text><text x="416.9" y="212.8" class="t" transform="matrix(0.83 0 0 1 70.87 0)">Potters Bar</text><text x="377.2" y="224.9" class="t" transform="matrix(0.83 0 0 1 64.12 0)">Watford</text><text x="329.1" y="239.3" class="t" transform="matrix(0.83 0 0 1 55.95 0)">Beaconsfield</text><text x="412.6" y="271.6" class="L" text-anchor="start">London</text><text x="336.3" y="276.1" class="t" transform="matrix(0.83 0 0 1 57.17 0)">Eton</text><text x="346" y="294.7" class="t" transform="matrix(0.83 0 0 1 58.82 0)">Egham</text><text x="307.4" y="298.3" class="t" transform="matrix(0.83 0 0 1 52.26 0)">Bracknell</text><text x="43.3" y="312.4" class="t" transform="matrix(0.83 0 0 1 7.36 0)">Melksham</text><text x="28.9" y="328.5" class="t" transform="matrix(0.83 0 0 1 4.91 0)">Trowbridge</text><text x="6" y="356.2" class="t" transform="matrix(0.83 0 0 1 1.02 0)">Frome</text><text x="133.5" y="352.6" class="t" transform="matrix(0.83 0 0 1 22.70 0)">Tidworth</text><text x="110.7" y="374.3" class="t" transform="matrix(0.83 0 0 1 18.82 0)">Amesbury</text><text x="108.3" y="405.8" class="c">Salisbury</text><text x="31.3" y="425.3" class="t" transform="matrix(0.83 0 0 1 5.32 0)">Shaftesbury</text><text x="92" y="461.3" class="t" transform="matrix(0.83 0 0 1 15.64 0)">Ringwood</text><text x="232.4" y="317.2" class="t" transform="matrix(0.83 0 0 1 39.51 0)">Tadley</text><text x="244.5" y="344.9" class="t" transform="matrix(0.83 0 0 1 41.57 0)">Basingstoke</text><text x="168.7" y="363.4" class="t" transform="matrix(0.83 0 0 1 28.68 0)">Andover</text><text x="201.1" y="408.3" class="c">Winchester</text><text x="165" y="430.3" class="t" transform="matrix(0.83 0 0 1 28.05 0)">Romsey</text><text x="220.4" y="437.5" class="t" transform="matrix(0.83 0 0 1 37.47 0)">Bishop's</text><text x="220.4" y="443.6" class="t" transform="matrix(0.83 0 0 1 37.47 0)">Waltham</text><text x="273.3" y="426" class="t" transform="matrix(0.83 0 0 1 46.46 0)">Petersfield</text><text x="183.1" y="456.4" class="c">Southampton</text><text x="221.6" y="457.3" class="t" transform="matrix(0.83 0 0 1 37.67 0)">Wickham</text><text x="256.5" y="454.9" class="t" transform="matrix(0.83 0 0 1 43.61 0)">Horndean</text><text x="286.6" y="392.3" class="t" transform="matrix(0.83 0 0 1 48.72 0)">Bordon</text><text x="300" y="339.3" class="t" transform="matrix(0.83 0 0 1 51.00 0)">Fleet</text><text x="297" y="360.3" class="t" transform="matrix(0.83 0 0 1 50.49 0)">Farnham</text><text x="302.6" y="312.9" class="t" transform="matrix(0.83 0 0 1 51.44 0)">Crowthorne</text><text x="356.8" y="312.9" class="t" transform="matrix(0.83 0 0 1 60.66 0)">Addlestone</text><text x="404.9" y="319.4" class="t" transform="matrix(0.83 0 0 1 68.83 0)">Ewell</text><text x="346" y="329.3" class="t" transform="matrix(0.83 0 0 1 58.82 0)">Woking</text><text x="390.5" y="336.3" class="t" transform="matrix(0.83 0 0 1 66.39 0)">Leatherhead</text><text x="343.5" y="353.3" class="t" transform="matrix(0.83 0 0 1 58.40 0)">Guildford</text><text x="390.5" y="355.5" class="t" transform="matrix(0.83 0 0 1 66.39 0)">Dorking</text><text x="421.7" y="353.3" class="t" transform="matrix(0.83 0 0 1 71.69 0)">Redhill</text><text x="336.3" y="370.2" class="t" transform="matrix(0.83 0 0 1 57.17 0)">Godalming</text><text x="419.3" y="374.3" class="t" transform="matrix(0.83 0 0 1 71.28 0)">Horley</text><text x="417.6" y="392.3" class="t" transform="matrix(0.83 0 0 1 70.99 0)">Crawley</text><text x="388" y="408" class="t" transform="matrix(0.83 0 0 1 65.96 0)">Horsham</text><text x="308.6" y="431.3" class="t" transform="matrix(0.83 0 0 1 52.46 0)">Midhurst</text><text x="432" y="425.3" class="t" transform="matrix(0.83 0 0 1 73.44 0)">Haywards</text><text x="436" y="431.3" class="t" transform="matrix(0.83 0 0 1 74.12 0)">Heath</text><text x="388" y="460.3" class="t" transform="matrix(0.83 0 0 1 65.96 0)">Steyning</text></g>
<text x="327" y="441.5" text-anchor="middle" font-family="Liberation Sans, sans-serif" font-size="6.2" font-weight="bold" fill="#6cae5a" textLength="91" lengthAdjust="spacingAndGlyphs">SOUTH DOWNS NATIONAL PARK</text>
<g stroke="#ffffff" stroke-width="1" opacity="0.6"><line x1="0" y1="98.4" x2="440" y2="98.4"/><line x1="0" y1="234.4" x2="440" y2="234.4"/><line x1="0" y1="370.4" x2="440" y2="370.4"/><line x1="48" y1="0" x2="48" y2="461"/><line x1="184" y1="0" x2="184" y2="461"/><line x1="320" y1="0" x2="320" y2="461"/></g>
<polygon points="83,131.7 86.2,126.5 90.3,120.2 92.4,115.6 97.6,113.5 101.3,107.2 106.5,108.8 110,114 113.2,120.2 118,113.5 121.6,112.4 127.8,113.5 134,115 136.2,121.3 146.6,123.4 156,120.8 160,114 168.5,110.9 176.3,109.8 175.8,107.2 169,101.5 165,99 164.5,93 168.4,84 170,79 178.6,73 181,66 190,60.6 199,58 201,52 203.6,45 210.6,47 219,44 220.8,51 224.7,53.5 228.6,63 234.8,65 236.4,70 232.5,77 224.7,77.8 221.5,82.4 222.3,91.8 219,96.5 219,103.5 221.5,109 225.4,111.3 231,112 231.7,116 227.8,120 216.8,123.8 210.6,128.5 213,134 221.5,131.7 235.6,130 246.5,138 250.4,139.5 259.8,145 269,143.4 275.4,149 284.8,152.8 290.3,150.4 299.8,140.9 299,138.5 304.5,134.6 307.6,137 309,144 303.7,147 304.5,154 308.4,157 321.7,155.7 325.6,160.4 324.8,164.3 328.7,169.8 335,173 332.6,176 325.6,183 319.3,187.8 317,192.4 313,194 301.4,194.8 299.8,201.8 304.5,206.5 310.8,209.6 312.6,222 318.3,227.8 325.8,230.6 327.6,239 323.9,245.6 326.7,249.3 332.3,248.4 336,251.2 343.6,253 347.3,257.8 346.4,265.3 351,271 346.4,275.6 347.3,283 352,287.8 357.7,291.5 359.5,297.2 367,302.8 371.7,303.8 380,298 389,299 395,301 396,296 390,292 396,294 396,301 393,304 384,304 374,305 366,308.4 368,317.8 369.2,328.4 374,337.8 373,345.3 374.9,355.6 381.4,360.3 384.3,369.7 379.6,370.6 374,368.7 373,379 375.8,383.7 379.6,387.5 372,392.2 357,396 351.4,394 348.6,387.5 346.7,382.8 338.3,381.9 319.5,384.7 315.8,390.3 316.7,396.9 320.5,401.5 320.5,408 314.8,402.5 308.3,403.4 297,409 290.4,411.9 289.5,405.3 284.5,399 277,395.3 273.3,398 272.4,401.9 268.6,403.8 269.5,410.3 268.6,416 262,416.9 257.3,413 248,411.2 248,406.6 249.8,401 248.9,386 241.4,384 240.5,380.3 247,373.7 245.2,369 254.5,364.3 252.7,359.7 239.5,355.9 231,353 230,344.6 235.8,340 229.2,335.3 218,332.5 209.5,330.6 202,329.6 194.6,328.4 183.3,324.7 172,316.2 162.7,315.3 153.3,319 148.6,328.4 136.4,320 132.7,315.3 132.7,309.7 129,307.8 115.8,308.7 102.7,309.7 80,305 69.8,308.7 70.8,304 80,299.4 83,292.8 81,283.4 83,276.8 97,271.2 99.8,264.6 95.2,260 88.6,253.4 84.8,248.7 75.5,244 70.8,240.3 59.5,236.5 52.3,236 49.3,230 45.2,224.9 44.2,214.7 46.2,204.5 58.4,192.3 55.4,181 58.4,174 51.3,167 50.3,162.9 56.4,158.8 68.6,156.8 69.6,150.7 66.5,142.5 72.7,138.5 75.7,142.5 82.8,138.5 83.8,131.4" fill="#3388ff" fill-opacity="0.2" stroke="#3388ff" stroke-width="2.2" stroke-linejoin="round"/>
<g filter="url(#bl)"><ellipse cx="198.8" cy="177.7" rx="4" ry="6.5" transform="rotate(20 198.8 177.7)" fill="#000" opacity="0.6"/><ellipse cx="187.3" cy="178.7" rx="4" ry="6.5" transform="rotate(20 187.3 178.7)" fill="#000" opacity="0.6"/><ellipse cx="126.8" cy="208.2" rx="4" ry="6.5" transform="rotate(20 126.8 208.2)" fill="#000" opacity="0.6"/><ellipse cx="203.7" cy="211.4" rx="4" ry="6.5" transform="rotate(20 203.7 211.4)" fill="#000" opacity="0.6"/><ellipse cx="235" cy="232" rx="4" ry="6.5" transform="rotate(20 235 232)" fill="#000" opacity="0.6"/><ellipse cx="262.6" cy="276.3" rx="4" ry="6.5" transform="rotate(20 262.6 276.3)" fill="#000" opacity="0.6"/></g>
<path d="M204.3 184.2L197 172.6A8.6 8.6 0 1 1 211.6 172.6Z" fill="#120f66"/><circle cx="204.3" cy="168.2" r="5" fill="#f7f7f5"/><path d="M192.8 185.2L185.5 173.6A8.6 8.6 0 1 1 200.1 173.6Z" fill="#120f66"/><circle cx="192.8" cy="169.2" r="5" fill="#f7f7f5"/><path d="M132.3 214.7L125 203.1A8.6 8.6 0 1 1 139.6 203.1Z" fill="#120f66"/><circle cx="132.3" cy="198.7" r="5" fill="#f7f7f5"/><path d="M209.2 217.9L201.9 206.3A8.6 8.6 0 1 1 216.5 206.3Z" fill="#120f66"/><circle cx="209.2" cy="201.9" r="5" fill="#f7f7f5"/><path d="M240.5 238.5L233.2 226.9A8.6 8.6 0 1 1 247.8 226.9Z" fill="#120f66"/><circle cx="240.5" cy="222.5" r="5" fill="#f7f7f5"/><path d="M268.1 282.8L260.8 271.2A8.6 8.6 0 1 1 275.4 271.2Z" fill="#120f66"/><circle cx="268.1" cy="266.8" r="5" fill="#f7f7f5"/>
</svg></div>
</body></html>
